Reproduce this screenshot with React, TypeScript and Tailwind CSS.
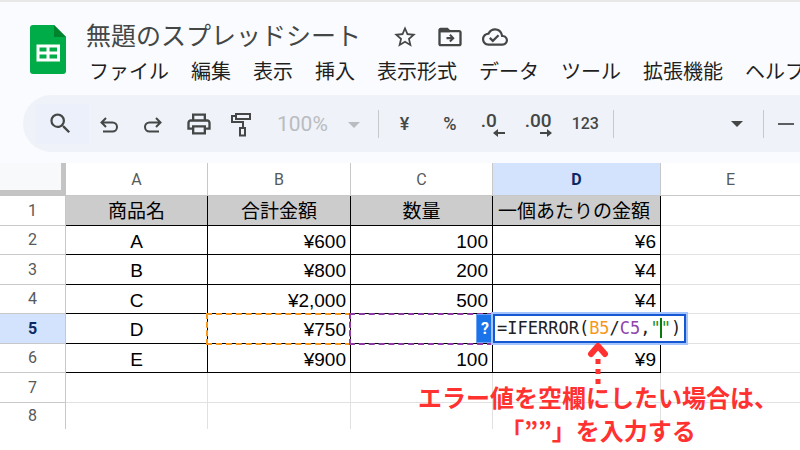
import type { ReactNode } from 'react'
import clsx from 'clsx'

const MENUS = ['ファイル', '編集', '表示', '挿入', '表示形式', 'データ', 'ツール', '拡張機能', 'ヘルプ']

const COLUMNS = ['A', 'B', 'C', 'D', 'E']

const ROWS = [
  ['商品名', '合計金額', '数量', '一個あたりの金額'],
  ['A', '¥600', '100', '¥6'],
  ['B', '¥800', '200', '¥4'],
  ['C', '¥2,000', '500', '¥4'],
  ['D', '¥750', '', ''],
  ['E', '¥900', '100', '¥9'],
  [],
  []
]

const ACTIVE_ROW = 4
const ACTIVE_COL = 3
const LAST_DATA_ROW = 5

function rowHeight(row: number) {
  if (row === ROWS.length - 1) return 'h-[26px] *:border-b-0'
  return row % 2 === 0 ? 'h-[30px]' : 'h-[29px]'
}

function IconButton({ label, className, children }: { label: string; className?: string; children: ReactNode }) {
  return (
    <button type="button" aria-label={label} className={clsx('flex shrink-0 items-center justify-center', className)}>
      {children}
    </button>
  )
}

function MaterialIcon({ d, className = 'size-7' }: { d: string; className?: string }) {
  return (
    <svg viewBox="0 0 24 24" fill="currentColor" className={className} aria-hidden="true">
      <path d={d} />
    </svg>
  )
}

function Caret() {
  return (
    <svg viewBox="0 0 12 6" className="h-[6px] w-3" fill="currentColor" aria-hidden="true">
      <path d="M0 0h12L6 6z" />
    </svg>
  )
}

function SheetsLogo() {
  return (
    <svg viewBox="0 0 36 49" className="h-[49px] w-9 shrink-0" role="img" aria-label="スプレッドシート">
      <path d="M3 0h21l12 12v34a3 3 0 0 1-3 3H3a3 3 0 0 1-3-3V3a3 3 0 0 1 3-3z" fill="#00ac47" />
      <path d="M24 0l12 12H24z" fill="#00832d" />
      <path
        d="M6.500 19.500h23.500v17H6.500zm3 3v4h7v-4zm10 0v4h7.500v-4zM9.500 29.500v4h7v-4zm10 0v4h7.500v-4z"
        fill="#fff"
        fillRule="evenodd"
      />
    </svg>
  )
}

function Header() {
  return (
    <header className="flex gap-5 border-t-2 border-[#e8e8e8] pl-[30px]">
      <div className="pt-[23px]">
        <SheetsLogo />
      </div>
      <div className="min-w-0 flex-1 pt-[14px]">
        <div className="flex h-10 items-center text-[#444746]">
          <h1 className="shrink-0 text-[25px] leading-10 whitespace-nowrap">無題のスプレッドシート</h1>
          <div className="ml-[31px] flex items-center gap-[18px] pt-[2px]">
            <IconButton label="スターを付ける">
              <MaterialIcon
                className="size-[26px]"
                d="M22 9.24l-7.19-.62L12 2 9.19 8.63 2 9.24l5.46 4.73L5.82 21 12 17.27 18.18 21l-1.63-7.03L22 9.24zM12 15.4l-3.76 2.27 1-4.28-3.32-2.88 4.38-.38L12 6.1l1.71 4.04 4.38.38-3.32 2.88 1 4.28L12 15.4z"
              />
            </IconButton>
            <IconButton label="移動">
              <svg viewBox="0 0 24 24" className="size-7" fill="currentColor" aria-hidden="true">
                <path d="M20 6h-8l-2-2H4c-1.100 0-2 .9-2 2v12c0 1.100.9 2 2 2h16c1.100 0 2-.9 2-2V8c0-1.100-.9-2-2-2zm0 12H4V8h16v10z" />
                <path d="M3 5h7l2 3H3z" />
                <path d="M12.500 9.500L16 13l-3.500 3.500-1.200-1.200 1.400-1.400H9v-1.800h3.700l-1.400-1.400z" />
              </svg>
            </IconButton>
            <IconButton label="ドキュメントのステータス">
              <MaterialIcon
                className="size-[26px]"
                d="M19.35 10.04C18.67 6.59 15.64 4 12 4 9.11 4 6.6 5.64 5.35 8.04 2.34 8.36 0 10.91 0 14c0 3.310 2.690 6 6 6h13c2.760 0 5-2.240 5-5 0-2.640-2.050-4.780-4.650-4.960zM19 18H6c-2.210 0-4-1.790-4-4 0-2.050 1.530-3.760 3.560-3.970l1.070-.11.5-.95C8.080 7.140 9.940 6 12 6c2.620 0 4.880 1.860 5.390 4.430l.3 1.500 1.530.11c1.560.1 2.780 1.410 2.780 2.960 0 1.650-1.350 3-3 3zm-9-3.820l-2.090-2.090L6.500 13.500 10 17l6.010-6.010-1.410-1.410z"
              />
            </IconButton>
          </div>
        </div>
        <nav className="flex gap-[22px] overflow-hidden pl-[3px] text-xl leading-8 text-[#1f1f1f]">
          {MENUS.map((menu) => (
            <button key={menu} type="button" className="shrink-0 whitespace-nowrap">
              {menu}
            </button>
          ))}
        </nav>
      </div>
    </header>
  )
}

function Divider({ className }: { className?: string }) {
  return <div className={clsx('h-7 w-px shrink-0 bg-[#c7c9cc]', className)} />
}

function Toolbar() {
  return (
    <div
      role="toolbar"
      aria-label="メイン"
      className="mt-[7px] ml-[23px] flex h-[57px] items-center overflow-hidden rounded-l-full bg-[#eff2f8] pl-[13px] text-[#444746]"
    >
      <IconButton label="検索" className="h-10 w-[53px] bg-[#ecf0fa] pr-1">
        <MaterialIcon
          className="size-[27px]"
          d="M15.500 14h-.79l-.28-.27A6.471 6.471 0 0 0 16 9.500 6.500 6.500 0 1 0 9.500 16c1.610 0 3.090-.59 4.230-1.570l.27.28v.79l5 4.990L20.490 19l-4.990-5zm-6 0C7.010 14 5 11.990 5 9.500S7.010 5 9.500 5 14 7.010 14 9.500 11.990 14 9.500 14z"
        />
      </IconButton>
      <IconButton label="元に戻す" className="w-10 pt-[2px]">
        <svg viewBox="0 0 20 20" className="size-5" fill="none" stroke="currentColor" strokeWidth="2" aria-hidden="true">
          <path d="M7 3L2.500 7.500 7 12M3 7.500h10.500a4.500 4.500 0 0 1 0 9H4" />
        </svg>
      </IconButton>
      <IconButton label="やり直し" className="ml-1 w-10 pt-[2px]">
        <svg viewBox="0 0 20 20" className="size-5" fill="none" stroke="currentColor" strokeWidth="2" aria-hidden="true">
          <path d="M13 3l4.500 4.500L13 12M17 7.500H6.500a4.500 4.500 0 0 0 0 9H16" />
        </svg>
      </IconButton>
      <IconButton label="印刷" className="ml-1 w-11">
        <MaterialIcon d="M19 8h-1V3H6v5H5c-1.660 0-3 1.340-3 3v6h4v4h12v-4h4v-6c0-1.660-1.340-3-3-3zM8 5h8v3H8V5zm8 12v2H8v-4h8v2zm2-2v-2H6v2H4v-4c0-.55.45-1 1-1h14c.55 0 1 .45 1 1v4h-2z" />
      </IconButton>
      <IconButton label="書式を貼り付け" className="w-10 pt-[2px]">
        <svg viewBox="0 0 22 26" className="h-[26px] w-[22px]" fill="none" stroke="currentColor" strokeWidth="2" aria-hidden="true">
          <path d="M6 2h14v5H6zM6 4H2v6h11v6M10 16h5v7.500h-5z" />
        </svg>
      </IconButton>
      <button
        type="button"
        className="ml-4 flex shrink-0 items-center gap-5 pt-[2px] font-['Roboto',sans-serif] text-[21px] text-[#b9bcc1]"
      >
        100%
        <Caret />
      </button>
      <Divider className="ml-[18px]" />
      <div className="flex shrink-0 items-center font-['Roboto',sans-serif] text-lg font-medium">
        <button type="button" className="ml-[21px]">¥</button>
        <button type="button" className="ml-[34px]">%</button>
        <IconButton label="小数点以下の桁数を減らす" className="ml-6 pt-[2px]">
          <span className="flex w-6 flex-col items-start text-[19px] leading-[18px]">
            .0
            <svg viewBox="0 0 12 8" className="-mt-px h-2 w-3 self-end" fill="currentColor" aria-hidden="true">
              <path d="M12 3v2H5v3L0 4l5-4v3z" />
            </svg>
          </span>
        </IconButton>
        <IconButton label="小数点以下の桁数を増やす" className="ml-5 pt-[2px]">
          <span className="flex w-[27px] flex-col items-start text-[19px] leading-[18px]">
            .00
            <svg viewBox="0 0 12 8" className="-mt-px h-2 w-3 self-end" fill="currentColor" aria-hidden="true">
              <path d="M0 3v2h7v3l5-4-5-4v3z" />
            </svg>
          </span>
        </IconButton>
        <button type="button" className="ml-5 text-base">123</button>
      </div>
      <Divider className="ml-[14px]" />
      <IconButton label="フォント" className="ml-[117px]">
        <Caret />
      </IconButton>
      <Divider className="ml-5" />
      <IconButton label="フォントサイズを縮小" className="ml-[14px]">
        <span className="h-[2px] w-4 bg-[#5c5f61]" />
      </IconButton>
    </div>
  )
}

function FormulaEditor() {
  return (
    <div className="absolute top-0 -left-4 z-20 flex items-center">
      <button
        type="button"
        aria-label="ヘルプを表示"
        className="h-[27px] w-4 bg-[#1a73e8] font-['Roboto',sans-serif] text-base leading-none font-bold text-white ring-1 ring-[#6fa3f5]"
      >
        ?
      </button>
      <div
        role="textbox"
        aria-label="D5"
        contentEditable
        suppressContentEditableWarning
        className="h-[29px] w-[193px] border-2 border-[#1658d3] bg-white pl-[2px] text-left font-['DejaVu_Sans_Mono',monospace] text-[17px] leading-[25px] whitespace-nowrap text-[#202124] ring-2 ring-[#a4c4fb] outline-none"
      >
        =IFERROR(<span className="text-[#f7981d]">B5</span>/<span className="text-[#8e44ad]">C5</span>,
        <span className="text-[#1a8f1a]">"</span>
        <span className="relative text-[#1a8f1a]">
          <span className="absolute top-0 -left-px h-5 w-[2px] bg-[#0b7a0b]" />"
        </span>
        )
      </div>
    </div>
  )
}

function Cell({ value, row, col }: { value?: string; row: number; col: number }) {
  const isHeading = row === 0 && col <= 3
  const inData = row <= LAST_DATA_ROW && col <= 3
  const isRange = row === ACTIVE_ROW && (col === 1 || col === 2)

  return (
    <td
      className={clsx(
        'relative border-r border-b p-0 pt-[3px] whitespace-nowrap last:border-r-0',
        inData ? 'border-black' : 'border-[#e1e1e1]',
        isHeading && 'bg-[#cccccc]',
        isHeading || col === 0 ? 'text-center' : 'pr-1 text-right',
        isHeading && col === 3 && 'pr-[5px]'
      )}
    >
      {value}
      {isRange && (
        <div
          className={clsx(
            'pointer-events-none absolute -top-px -right-px bottom-[-2px] left-[-2px] z-10 border-2 border-dashed',
            col === 1 ? 'border-[#f7981d]' : 'border-[#8e3ba5]'
          )}
        />
      )}
      {row === ACTIVE_ROW && col === ACTIVE_COL && <FormulaEditor />}
    </td>
  )
}

function Grid() {
  return (
    <table className="w-full table-fixed border-separate border-spacing-0 bg-white">
      <colgroup>
        <col className="w-[66px]" />
        <col className="w-[142px]" />
        <col className="w-[143px]" />
        <col className="w-[142px]" />
        <col className="w-[168px]" />
        <col />
      </colgroup>
      <thead className="font-['Roboto',sans-serif] text-base text-[#575a5a]">
        <tr className="h-[33px]">
          <td className="border-r-[5px] border-b-[6px] border-[#c4c4c4] bg-[#f8f9fa] p-0" />
          {COLUMNS.map((name, col) => (
            <th
              key={name}
              scope="col"
              className={clsx(
                'border-r border-b border-[#c8c8c8] p-0 pt-[2px] last:border-r-0',
                col === ACTIVE_COL ? 'bg-[#d3e3fd] font-bold text-[#0b2a63]' : 'font-normal'
              )}
            >
              {name}
            </th>
          ))}
        </tr>
      </thead>
      <tbody className="text-[19px] leading-6 text-black">
        {ROWS.map((cells, row) => (
          <tr key={row} className={rowHeight(row)}>
            <th
              scope="row"
              className={clsx(
                "border-r border-b border-[#c8c8c8] p-0 font-['Roboto',sans-serif] text-base leading-5",
                row === ACTIVE_ROW ? 'bg-[#d3e3fd] font-bold text-[#0b2a63]' : 'font-normal text-[#575a5a]'
              )}
            >
              {row + 1}
            </th>
            {COLUMNS.map((name, col) => (
              <Cell key={name} value={cells[col]} row={row} col={col} />
            ))}
          </tr>
        ))}
      </tbody>
    </table>
  )
}

function Note() {
  return (
    <div className="pointer-events-none absolute top-[179px] left-[418px] z-30 flex flex-col items-center text-[#ff3131]">
      <svg viewBox="0 0 22 42" className="h-[42px] w-[22px]" fill="none" stroke="currentColor" aria-hidden="true">
        <path d="M4 12l7-8 7 8" strokeWidth="6" strokeLinecap="round" strokeLinejoin="round" />
        <path d="M11 17v25" strokeWidth="5" strokeDasharray="5 5" />
      </svg>
      <p className="-mt-1 text-center font-['Noto_Sans_CJK_JP',sans-serif] text-2xl leading-[33px] font-bold whitespace-nowrap">
        エラー値を空欄にしたい場合は、
        <br />
        「<span className="font-['Noto_Sans_CJK_KR',sans-serif]">””</span>」を入力する
      </p>
    </div>
  )
}

export default function App() {
  return (
    <div className="min-h-screen overflow-hidden bg-white font-['Liberation_Sans','Noto_Sans_CJK_JP',sans-serif]">
      <div className="bg-[#f9fbfe] pb-[11px]">
        <Header />
        <Toolbar />
      </div>
      <main className="relative">
        <Grid />
        <Note />
      </main>
    </div>
  )
}
